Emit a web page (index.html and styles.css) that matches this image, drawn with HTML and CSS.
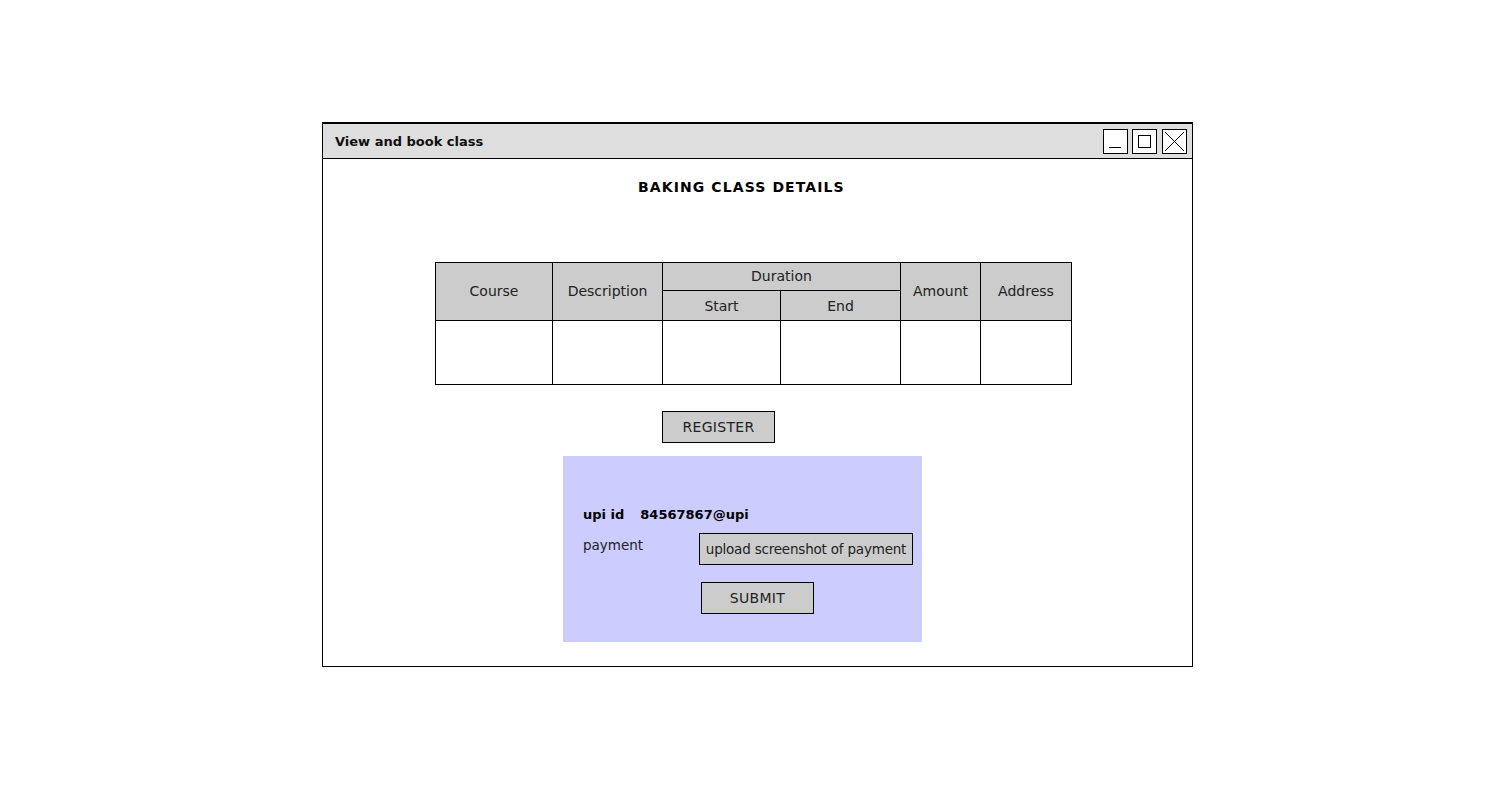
FILE: index.html
```html
<!DOCTYPE html>
<html>
<head>
<meta charset="utf-8">
<title>View and book class</title>
<link rel="stylesheet" href="styles.css">
</head>
<body>
<div class="window">
  <div class="titlebar">
    <span class="title">View and book class</span>
    <div class="controls">
      <span class="ctl ctl-min"><svg width="25" height="25" viewBox="0 0 25 25"><line x1="6" y1="18.5" x2="18" y2="18.5" stroke="#000" stroke-width="1"/></svg></span>
      <span class="ctl ctl-max"><svg width="25" height="25" viewBox="0 0 25 25"><rect x="6.5" y="6.5" width="12" height="12" fill="none" stroke="#000" stroke-width="1"/></svg></span>
      <span class="ctl ctl-close"><svg width="25" height="25" viewBox="0 0 25 25"><line x1="3" y1="3" x2="22" y2="22" stroke="#000" stroke-width="1"/><line x1="22" y1="3" x2="3" y2="22" stroke="#000" stroke-width="1"/></svg></span>
    </div>
  </div>
  <div class="content">
    <h1 class="heading">BAKING CLASS DETAILS</h1>
    <table class="classes">
      <colgroup>
        <col class="c-course"><col class="c-desc"><col class="c-start"><col class="c-end"><col class="c-amount"><col class="c-address">
      </colgroup>
      <thead>
        <tr class="h1">
          <th rowspan="2">Course</th>
          <th rowspan="2">Description</th>
          <th colspan="2">Duration</th>
          <th rowspan="2">Amount</th>
          <th rowspan="2">Address</th>
        </tr>
        <tr class="h2">
          <th>Start</th>
          <th>End</th>
        </tr>
      </thead>
      <tbody>
        <tr class="row"><td></td><td></td><td></td><td></td><td></td><td></td></tr>
      </tbody>
    </table>
    <div class="btn btn-register">REGISTER</div>
    <div class="panel">
      <div class="upi"><span class="upi-label">upi id</span><span class="upi-value">84567867@upi</span></div>
      <div class="pay-row">
        <span class="pay-label">payment</span>
        <div class="upload">upload screenshot of payment</div>
      </div>
      <div class="btn btn-submit">SUBMIT</div>
    </div>
  </div>
</div>
</body>
</html>
```
FILE: styles.css
```css
* { box-sizing: border-box; }
html, body { margin: 0; padding: 0; background: #fff; }
body {
  font-family: "DejaVu Sans", "Liberation Sans", sans-serif;
  color: #111;
  width: 1500px;
  height: 800px;
  overflow: hidden;
}
.window {
  margin: 122px 0 0 322px;
  width: 871px;
  height: 545px;
  border: 1px solid #000;
  border-top-width: 2px;
  display: flex;
  flex-direction: column;
}
.titlebar {
  height: 35px;
  background: #dedede;
  border-bottom: 1px solid #000;
  display: flex;
  align-items: center;
  justify-content: space-between;
  padding: 0 5px 0 12px;
}
.title {
  font-size: 13px;
  font-weight: bold;
  padding-top: 1px;
}
.controls {
  display: flex;
  gap: 4px;
  margin-top: 1px;
}
.ctl {
  width: 25px;
  height: 25px;
  border: 1px solid #000;
  background: #fff;
  display: block;
  position: relative;
}
.ctl svg { position: absolute; left: -1px; top: -1px; }
.ctl-close { margin-left: 1px; }
.content {
  flex: 1;
  display: flex;
  flex-direction: column;
  align-items: flex-start;
}
.heading {
  margin: 19px 0 0 315px;
  font-size: 14px;
  font-weight: bold;
  letter-spacing: 1.1px;
  line-height: 18px;
  color: #000;
}
.classes {
  margin: 66px 0 0 112px;
  border-collapse: collapse;
  table-layout: fixed;
  width: 636px;
  font-size: 14px;
}
.c-course { width: 117px; }
.c-desc { width: 110px; }
.c-start { width: 118px; }
.c-end { width: 120px; }
.c-amount { width: 80px; }
.c-address { width: 91px; }
.classes th, .classes td {
  border: 1px solid #000;
  padding: 0;
}
.classes th {
  background: #cccccc;
  font-weight: normal;
  color: #222;
  text-align: center;
}
.h1 { height: 28px; }
.h1 th { padding-bottom: 2px; }
.h2 { height: 30px; }
.h2 th { padding-top: 0; }
.row { height: 64px; }
.btn {
  background: #cccccc;
  border: 1px solid #000;
  font-size: 14px;
  color: #222;
  display: flex;
  align-items: center;
  justify-content: center;
  letter-spacing: 0.3px;
}
.btn-register {
  margin: 26px 0 0 339px;
  width: 113px;
  height: 32px;
}
.panel {
  margin: 13px 0 0 240px;
  width: 359px;
  height: 186px;
  background: #ccccff;
  padding: 49px 0 0 20px;
  display: flex;
  flex-direction: column;
  align-items: flex-start;
}
.upi {
  font-size: 13px;
  font-weight: bold;
  line-height: 20px;
  color: #000;
  display: flex;
  gap: 16px;
}
.pay-row {
  margin-top: 8px;
  display: flex;
  align-items: flex-start;
}
.pay-label {
  width: 116px;
  font-size: 13.5px;
  line-height: 20px;
  padding-top: 2px;
  color: #222;
}
.upload {
  width: 214px;
  height: 32px;
  background: #cccccc;
  border: 1px solid #000;
  font-size: 13.5px;
  color: #222;
  display: flex;
  align-items: center;
  justify-content: center;
  white-space: nowrap;
  letter-spacing: -0.2px;
}
.btn-submit {
  margin: 17px 0 0 118px;
  width: 113px;
  height: 32px;
}
```
